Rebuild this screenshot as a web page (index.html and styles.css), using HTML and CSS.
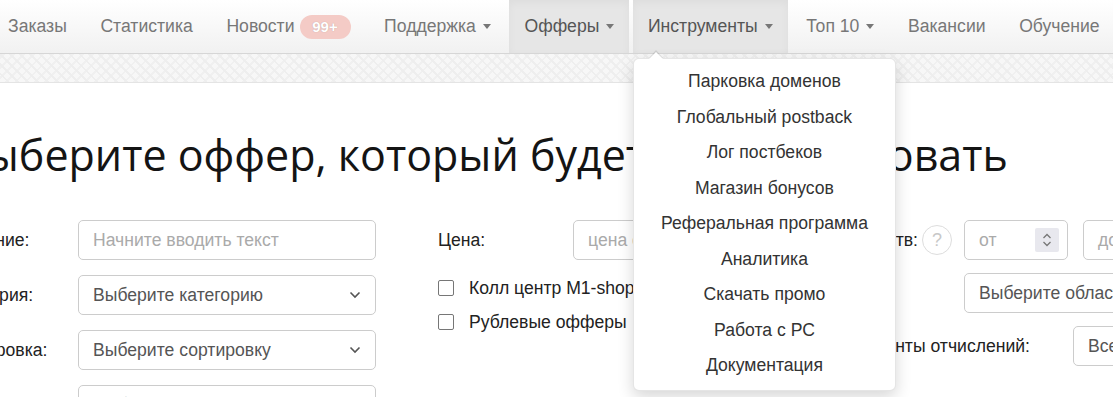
FILE: index.html
```html
<!DOCTYPE html>
<html lang="ru">
<head>
  <meta charset="UTF-8" />
  <title>Выбор оффера</title>
  <link rel="stylesheet" href="styles.css">
</head>
<body>
  <nav class="navbar">
    <ul class="nav">
      <li><a>Заказы</a></li>
      <li><a>Статистика</a></li>
      <li><a>Новости <span class="badge">99+</span></a></li>
      <li><a>Поддержка <span class="caret"></span></a></li>
      <li class="active"><a>Офферы <span class="caret"></span></a></li>
      <li class="active open">
        <a>Инструменты <span class="caret"></span></a>
        <ul class="dropdown">
          <li>Парковка доменов</li>
          <li>Глобальный postback</li>
          <li>Лог постбеков</li>
          <li>Магазин бонусов</li>
          <li>Реферальная программа</li>
          <li>Аналитика</li>
          <li>Скачать промо</li>
          <li>Работа с РС</li>
          <li>Документация</li>
        </ul>
      </li>
      <li><a>Топ 10 <span class="caret"></span></a></li>
      <li><a>Вакансии</a></li>
      <li><a>Обучение</a></li>
    </ul>
  </nav>
  <div class="pattern"></div>

  <div class="content">
    <h1>Выберите оффер, который будете рекламировать</h1>

    <div class="filters">
      <div class="col col-left">
        <div class="row">
          <label>Название:</label>
          <div class="field placeholder">Начните вводить текст</div>
        </div>
        <div class="row">
          <label>Категория:</label>
          <div class="field select">
            <span>Выберите категорию</span>
            <svg width="12" height="8" viewBox="0 0 12 8"><path d="M1.5 1.5 L6 6 L10.5 1.5" fill="none" stroke="#555" stroke-width="1.6"/></svg>
          </div>
        </div>
        <div class="row">
          <label>Сортировка:</label>
          <div class="field select">
            <span>Выберите сортировку</span>
            <svg width="12" height="8" viewBox="0 0 12 8"><path d="M1.5 1.5 L6 6 L10.5 1.5" fill="none" stroke="#555" stroke-width="1.6"/></svg>
          </div>
        </div>
        <div class="row">
          <label>Гео:</label>
          <div class="field select">
            <span>Выберите гео</span>
          </div>
        </div>
      </div>

      <div class="col col-mid">
        <div class="row">
          <label class="label-price">Цена:</label>
          <div class="field placeholder price">цена от</div>
        </div>
        <div class="check-list">
          <div class="check"><span class="box"></span>Колл центр M1-shop</div>
          <div class="check"><span class="box"></span>Рублевые офферы</div>
        </div>
      </div>

      <div class="col col-right">
        <div class="row">
          <label class="label-right">Количество средств:</label>
          <span class="help">?</span>
          <div class="field placeholder number">от
            <span class="spin">
              <svg width="10" height="16" viewBox="0 0 10 16"><path d="M1.5 6 L5 2.5 L8.5 6 M1.5 10 L5 13.5 L8.5 10" fill="none" stroke="#777" stroke-width="1.3"/></svg>
            </span>
          </div>
          <div class="field placeholder number">до</div>
        </div>
        <div class="row row-region">
          <div class="field select region"><span>Выберите область</span></div>
        </div>
        <div class="row row-pay">
          <label class="label-pay">Проценты отчислений:</label>
          <div class="field select all"><span>Все</span></div>
        </div>
      </div>
    </div>
  </div>
</body>
</html>
```

FILE: styles.css
```css
body {
  margin: 0;
  font-family: "Liberation Sans", Arial, sans-serif;
  color: #222;
  background: #fff;
  overflow: hidden;
}
.navbar {
  height: 53px;
  background: linear-gradient(#fff, #f1f1f1);
  border-bottom: 1px solid #d6d6d6;
}
.nav {
  list-style: none;
  margin: 0 0 0 -7px;
  padding: 0;
  display: flex;
  gap: 3.6px;
  white-space: nowrap;
}
.nav > li {
  position: relative;
}
.nav > li > a {
  display: flex;
  align-items: center;
  height: 53px;
  padding: 0 15px;
  font-size: 17.6px;
  color: #777;
}
.nav > li.active > a {
  background: #e6e6e6;
  color: #555;
  box-shadow: inset 0 3px 9px rgba(0, 0, 0, 0.04);
}
.badge {
  display: inline-block;
  margin-left: 5px;
  width: 51px;
  height: 24px;
  line-height: 24px;
  border-radius: 12px;
  background: #f4cbc6;
  color: #fff;
  font-size: 15px;
  font-weight: bold;
  text-align: center;
  text-shadow: 0 0 1px rgba(0, 0, 0, 0.25);
}
.caret {
  display: inline-block;
  margin-left: 7px;
  border-top: 5px solid #777;
  border-left: 4.5px solid transparent;
  border-right: 4.5px solid transparent;
}
.dropdown {
  position: absolute;
  top: 58px;
  left: 0;
  z-index: 10;
  width: 263px;
  margin: 0;
  padding: 5px 0 6px;
  list-style: none;
  background: #fff;
  border: 1px solid rgba(0, 0, 0, 0.1);
  border-radius: 6px;
  box-shadow: 0 6px 16px rgba(0, 0, 0, 0.16);
  box-sizing: border-box;
}
.dropdown::before,
.dropdown::after {
  content: "";
  position: absolute;
  left: 15px;
  border-left: 7px solid transparent;
  border-right: 7px solid transparent;
}
.dropdown::before {
  top: -9px;
  border-bottom: 8px solid rgba(0, 0, 0, 0.1);
}
.dropdown::after {
  top: -7px;
  border-bottom: 7px solid #fff;
}
.dropdown li {
  line-height: 35.5px;
  text-align: center;
  font-size: 17.6px;
  color: #333;
}
.pattern {
  height: 28px;
  border-bottom: 1px solid #e4e4e4;
  background-color: #f7f7f7;
  background-image:
    repeating-linear-gradient(45deg, transparent 0 5px, #eeeeee 5px 7px),
    repeating-linear-gradient(-45deg, transparent 0 5px, #f0f0f0 5px 7px);
}
.content {
  margin-left: -46px;
}
h1 {
  margin: 44px 0 0 4px;
  font-family: "Open Sans", sans-serif;
  font-weight: 400;
  font-size: 43px;
  line-height: 56px;
  color: #141414;
  white-space: nowrap;
}
.filters {
  display: flex;
  margin-top: 37px;
  font-size: 17.6px;
}
.col {
  display: flex;
  flex-direction: column;
  flex-shrink: 0;
}
.col-left {
  width: 430px;
  margin-left: -8px;
  gap: 15px;
}
.col-mid {
  width: 300px;
  margin-left: 62px;
}
.col-right {
  gap: 13px;
}
.row {
  display: flex;
  align-items: center;
  height: 40px;
}
.row label {
  color: #222;
  white-space: nowrap;
}
.col-left label {
  width: 132px;
}
.field {
  box-sizing: border-box;
  flex-shrink: 0;
  height: 40px;
  width: 298px;
  padding: 0 14px;
  border: 1px solid #ccc;
  border-radius: 5px;
  display: flex;
  align-items: center;
  color: #555;
  white-space: nowrap;
  overflow: hidden;
  background: #fff;
}
.placeholder {
  color: #aaa;
}
.select {
  justify-content: space-between;
}
.label-price {
  width: 135px;
}
.field.price {
  width: 150px;
}
.check-list {
  margin-top: 11px;
}
.check {
  display: flex;
  align-items: center;
  height: 34px;
  color: #222;
}
.box {
  box-sizing: border-box;
  width: 16px;
  height: 16px;
  margin-right: 15px;
  border: 1.5px solid #767676;
  border-radius: 2px;
}
.label-right {
  width: 180px;
  text-align: right;
}
.help {
  box-sizing: border-box;
  flex-shrink: 0;
  width: 30px;
  height: 30px;
  margin-left: 4px;
  margin-right: 12px;
  border: 1px solid #ddd;
  border-radius: 50%;
  color: #c8c8c8;
  font-size: 18px;
  display: flex;
  align-items: center;
  justify-content: center;
}
.field.number {
  width: 104px;
  margin-right: 15px;
  justify-content: space-between;
  padding-right: 8px;
}
.spin {
  width: 24px;
  height: 24px;
  background: #e8e8ee;
  border-radius: 2px;
  display: flex;
  align-items: center;
  justify-content: center;
}
.row-region {
  padding-left: 226px;
}
.field.region {
  width: 200px;
}
.label-pay {
  width: 292px;
  text-align: right;
  margin-right: 43px;
}
.field.all {
  width: 100px;
}
```
